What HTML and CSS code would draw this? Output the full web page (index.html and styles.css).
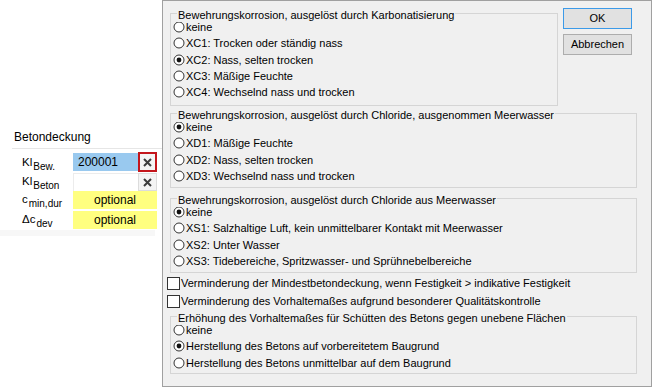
FILE: index.html
```html
<!DOCTYPE html>
<html lang="de">
<head>
<meta charset="utf-8">
<title>Betondeckung</title>
<link rel="stylesheet" href="styles.css">
</head>
<body>
<div class="app">
  <aside class="panel">
    <div class="panel-top"></div>
    <div class="panel-head">Betondeckung</div>
    <div class="props">
      <div class="prow r1">
        <div class="plabel">Kl<sub>Bew.</sub></div>
        <div class="pval sel">200001</div>
        <div class="pbtn active"><svg width="9" height="9" viewBox="0 0 9 9"><path d="M1 1L8 8M8 1L1 8" stroke="#3c3c3c" stroke-width="2"/></svg></div>
      </div>
      <div class="prow r2">
        <div class="plabel">Kl<sub>Beton</sub></div>
        <div class="pval"></div>
        <div class="pbtn"><svg width="9" height="9" viewBox="0 0 9 9"><path d="M1 1L8 8M8 1L1 8" stroke="#3c3c3c" stroke-width="2"/></svg></div>
      </div>
      <div class="prow r3">
        <div class="plabel small">c<sub>min,dur</sub></div>
        <div class="popt">optional</div>
      </div>
      <div class="prow r4">
        <div class="plabel small">Δc<sub>dev</sub></div>
        <div class="popt">optional</div>
      </div>
    </div>
    <div class="pband"></div>
  </aside>

  <section class="dialog">
    <div class="toprow">
      <div class="group g1">
        <div class="legend"><span>Bewehrungskorrosion, ausgelöst durch Karbonatisierung</span></div>
        <div class="radio"><svg class="rb" width="12" height="12" viewBox="0 0 12 12"><circle cx="6" cy="6" r="5" /></svg><span>keine</span></div>
        <div class="radio"><svg class="rb" width="12" height="12" viewBox="0 0 12 12"><circle cx="6" cy="6" r="5" /></svg><span>XC1: Trocken oder ständig nass</span></div>
        <div class="radio"><svg class="rb on" width="12" height="12" viewBox="0 0 12 12"><circle cx="6" cy="6" r="5" /><circle class="dot" cx="6" cy="6" r="2.4" /></svg><span>XC2: Nass, selten trocken</span></div>
        <div class="radio"><svg class="rb" width="12" height="12" viewBox="0 0 12 12"><circle cx="6" cy="6" r="5" /></svg><span>XC3: Mäßige Feuchte</span></div>
        <div class="radio"><svg class="rb" width="12" height="12" viewBox="0 0 12 12"><circle cx="6" cy="6" r="5" /></svg><span>XC4: Wechselnd nass und trocken</span></div>
      </div>
      <div class="buttons">
        <div class="btn default">OK</div>
        <div class="btn">Abbrechen</div>
      </div>
    </div>

    <div class="group g2">
      <div class="legend"><span>Bewehrungskorrosion, ausgelöst durch Chloride, ausgenommen Meerwasser</span></div>
      <div class="radio"><svg class="rb on" width="12" height="12" viewBox="0 0 12 12"><circle cx="6" cy="6" r="5" /><circle class="dot" cx="6" cy="6" r="2.4" /></svg><span>keine</span></div>
      <div class="radio"><svg class="rb" width="12" height="12" viewBox="0 0 12 12"><circle cx="6" cy="6" r="5" /></svg><span>XD1: Mäßige Feuchte</span></div>
      <div class="radio"><svg class="rb" width="12" height="12" viewBox="0 0 12 12"><circle cx="6" cy="6" r="5" /></svg><span>XD2: Nass, selten trocken</span></div>
      <div class="radio"><svg class="rb" width="12" height="12" viewBox="0 0 12 12"><circle cx="6" cy="6" r="5" /></svg><span>XD3: Wechselnd nass und trocken</span></div>
    </div>

    <div class="group g3">
      <div class="legend"><span>Bewehrungskorrosion, ausgelöst durch Chloride aus Meerwasser</span></div>
      <div class="radio"><svg class="rb on" width="12" height="12" viewBox="0 0 12 12"><circle cx="6" cy="6" r="5" /><circle class="dot" cx="6" cy="6" r="2.4" /></svg><span>keine</span></div>
      <div class="radio"><svg class="rb" width="12" height="12" viewBox="0 0 12 12"><circle cx="6" cy="6" r="5" /></svg><span>XS1: Salzhaltige Luft, kein unmittelbarer Kontakt mit Meerwasser</span></div>
      <div class="radio"><svg class="rb" width="12" height="12" viewBox="0 0 12 12"><circle cx="6" cy="6" r="5" /></svg><span>XS2: Unter Wasser</span></div>
      <div class="radio"><svg class="rb" width="12" height="12" viewBox="0 0 12 12"><circle cx="6" cy="6" r="5" /></svg><span>XS3: Tidebereiche, Spritzwasser- und Sprühnebelbereiche</span></div>
    </div>

    <div class="checks">
      <div class="check"><span class="cb"></span><span>Verminderung der Mindestbetondeckung, wenn Festigkeit &gt; indikative Festigkeit</span></div>
      <div class="check"><span class="cb"></span><span>Verminderung des Vorhaltemaßes aufgrund besonderer Qualitätskontrolle</span></div>
    </div>

    <div class="group g4">
      <div class="legend"><span>Erhöhung des Vorhaltemaßes für Schütten des Betons gegen unebene Flächen</span></div>
      <div class="radio"><svg class="rb" width="12" height="12" viewBox="0 0 12 12"><circle cx="6" cy="6" r="5" /></svg><span>keine</span></div>
      <div class="radio"><svg class="rb on" width="12" height="12" viewBox="0 0 12 12"><circle cx="6" cy="6" r="5" /><circle class="dot" cx="6" cy="6" r="2.4" /></svg><span>Herstellung des Betons auf vorbereitetem Baugrund</span></div>
      <div class="radio"><svg class="rb" width="12" height="12" viewBox="0 0 12 12"><circle cx="6" cy="6" r="5" /></svg><span>Herstellung des Betons unmittelbar auf dem Baugrund</span></div>
    </div>
  </section>
</div>
</body>
</html>
```

FILE: styles.css
```css
* { box-sizing: border-box; }
html, body {
  margin: 0;
  padding: 0;
  width: 652px;
  height: 387px;
  overflow: hidden;
  background: #ffffff;
}
.app {
  display: flex;
  width: 652px;
  height: 387px;
}

/* ---------- left property panel ---------- */
.panel {
  width: 162px;
  flex: none;
  background: #ffffff;
  font-family: "Liberation Sans", Arial, sans-serif;
  color: #000;
}
.panel-top { height: 126px; }
.panel-head {
  margin-left: 12px;
  height: 23px;
  line-height: 22px;
  font-size: 12px;
  padding-left: 2px;
  border-bottom: 1px solid #e6e6e6;
}
.props {
  margin-top: 3px;
  margin-right: 5px;
}
.prow {
  display: flex;
  align-items: stretch;
}
.prow.r1 { height: 20px; }
.prow.r2 { height: 18px; margin-top: 1px; }
.prow.r3 { height: 18px; }
.prow.r4 { height: 18px; margin-top: 2px; }
.plabel {
  width: 73px;
  flex: none;
  padding-left: 22px;
  font-size: 11.5px;
  line-height: 16px;
  white-space: nowrap;
}
.r1 .plabel { padding-top: 2px; }
.plabel sub {
  font-size: 10px;
  vertical-align: -4px;
  line-height: 0;
  margin-left: 1px;
}
.pval {
  width: 65px;
  flex: none;
  font-size: 12px;
  line-height: 18px;
  padding-left: 4px;
  background: #ffffff;
  border-top: 1px solid #ececec;
  border-left: 1px solid #ececec;
}
.pval.sel {
  background: #99c9ef;
  border: none;
  margin: 1px 0;
  padding-left: 5px;
  line-height: 18px;
}
.pbtn {
  width: 19px;
  flex: none;
  display: flex;
  align-items: center;
  justify-content: center;
  background: #f4f4f4;
  border: 1px solid #dcdcdc;
}
.pbtn.active {
  border: 2px solid #c4161c;
  background: #f4f4f4;
}
.popt {
  width: 84px;
  flex: none;
  background: #ffff80;
  font-size: 12px;
  line-height: 18px;
  text-align: center;
}
.pband {
  margin-top: 1px;
  height: 6px;
  margin-right: 7px;
  background: #f7f7f7;
}

/* ---------- dialog ---------- */
.dialog {
  flex: 1;
  height: 387px;
  background: #f0f0f0;
  border: 1px solid #a0a0a0;
  padding: 0 14px 0 7px;
  font-family: "Liberation Sans", Arial, sans-serif;
  font-size: 11px;
  color: #000;
}
.toprow {
  display: flex;
  align-items: flex-start;
  gap: 5px;
  margin-right: -14px;
}
.group {
  border: 1px solid #d5d5d5;
  padding-left: 1px;
}
.g1 { width: 388px; height: 93px; margin-top: 12px; }
.g2 { height: 75px; margin-top: 7px; }
.g3 { height: 75px; margin-top: 10px; }
.g4 { height: 58px; margin-top: 6px; }
.legend {
  height: 5px;
  white-space: nowrap;
}
.legend span {
  display: block;
  width: max-content;
  height: 13px;
  line-height: 13px;
  margin-left: 5px;
  padding: 0 1px;
  background: #f0f0f0;
  transform: translateY(-5px);
}
.radio {
  height: 16.3px;
  display: flex;
  align-items: center;
  white-space: nowrap;
}
.rb {
  flex: none;
  margin-left: 1px;
  margin-right: 1px;
}
.rb circle {
  fill: #ffffff;
  stroke: #333333;
  stroke-width: 1;
}
.rb circle.dot {
  fill: #111111;
  stroke: none;
}
.buttons {
  display: flex;
  flex-direction: column;
  gap: 5px;
  margin-top: 7px;
}
.btn {
  width: 69px;
  height: 21px;
  line-height: 19px;
  text-align: center;
  background: #e1e1e1;
  border: 1px solid #adadad;
}
.btn.default {
  border-color: #3c9ae8;
}
.checks {
  margin-top: 1px;
  margin-left: -3px;
}
.check {
  height: 18px;
  display: flex;
  align-items: center;
  white-space: nowrap;
}
.cb {
  width: 13px;
  height: 13px;
  flex: none;
  background: #ffffff;
  border: 1px solid #333333;
  margin-right: 1px;
}
```
